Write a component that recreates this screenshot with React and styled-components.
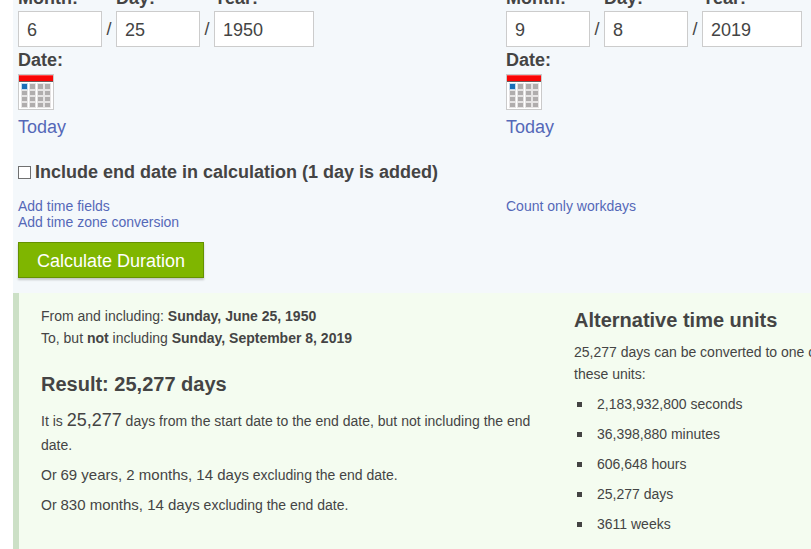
import React, { useState } from 'react';
import styled, { createGlobalStyle } from 'styled-components';

const START = { id: 'start', month: '6', day: '25', year: '1950' };
const END = { id: 'end', month: '9', day: '8', year: '2019' };

const UNITS = [
  '2,183,932,800 seconds',
  '36,398,880 minutes',
  '606,648 hours',
  '25,277 days',
  '3611 weeks',
];

// x / y of the day cells in the calendar icon
const CELL_X = [4, 12, 20, 27];
const CELL_Y = [10, 17, 23, 29];

const CalendarIcon = () => (
  <svg width="36" height="36" viewBox="0 0 36 36" shapeRendering="crispEdges" aria-hidden="true">
    <rect width="36" height="36" fill="#cacaca" />
    <rect x="1" y="1" width="34" height="34" fill="#fff" />
    <rect x="1" y="1" width="34" height="1" fill="#ff4a4a" />
    <rect x="1" y="2" width="34" height="5" fill="#fa0505" />
    <rect x="1" y="7" width="34" height="1" fill="#6b5a5a" />
    {CELL_Y.map((y, row) =>
      CELL_X.map((x, col) => {
        const active = row === 0 && col === 0;
        const h = row === 0 ? 5 : 4;
        return (
          <g key={`${x}-${y}`}>
            <rect
              x={x - 1}
              y={y - 1}
              width="7"
              height={h + 2}
              fill={active ? '#c3dcef' : '#e6e4e4'}
            />
            <rect x={x} y={y} width="5" height={h} fill={active ? '#1a6fb8' : '#b0adad'} />
          </g>
        );
      })
    )}
  </svg>
);

const DateGroup = ({ id, month, day, year }) => {
  const [value, setValue] = useState({ month, day, year });

  const onChange = (e) => setValue({ ...value, [e.target.name]: e.target.value });

  return (
    <div>
      <Fields>
        <Field>
          <Label htmlFor={`${id}-month`}>Month:</Label>
          <Input id={`${id}-month`} name="month" value={value.month} onChange={onChange} />
        </Field>
        <Slash>/</Slash>
        <Field>
          <Label htmlFor={`${id}-day`}>Day:</Label>
          <Input id={`${id}-day`} name="day" value={value.day} onChange={onChange} />
        </Field>
        <Slash>/</Slash>
        <Field>
          <Label htmlFor={`${id}-year`}>Year:</Label>
          <Input id={`${id}-year`} name="year" $wide value={value.year} onChange={onChange} />
        </Field>
      </Fields>
      <DateLabel htmlFor={`${id}-picker`}>Date:</DateLabel>
      <PickerButton id={`${id}-picker`} type="button">
        <CalendarIcon />
      </PickerButton>
      <TodayLink href="#today">Today</TodayLink>
    </div>
  );
};

const App = () => {
  const [includeEnd, setIncludeEnd] = useState(false);

  return (
    <>
      <GlobalStyle />
      <Page>
        <Form onSubmit={(e) => e.preventDefault()}>
          <Columns>
            <DateGroup {...START} />
            <DateGroup {...END} />
          </Columns>

          <CheckRow>
            <Checkbox
              id="include-end"
              type="checkbox"
              checked={includeEnd}
              onChange={(e) => setIncludeEnd(e.target.checked)}
            />
            <Label htmlFor="include-end">Include end date in calculation (1 day is added)</Label>
          </CheckRow>

          <Columns>
            <Links>
              <Link href="#time">Add time fields</Link>
              <Link href="#zone">Add time zone conversion</Link>
            </Links>
            <Links>
              <Link href="#workdays">Count only workdays</Link>
            </Links>
          </Columns>

          <SubmitButton type="submit">Calculate Duration</SubmitButton>
        </Form>

        <Results>
          <section>
            <Text>
              From and including: <b>Sunday, June 25, 1950</b>
              <br />
              To, but <b>not</b> including <b>Sunday, September 8, 2019</b>
            </Text>
            <ResultTitle>Result: 25,277 days</ResultTitle>
            <ResultText>
              It is <Big>25,277</Big> days from the start date to the end date, but not including the
              end date.
            </ResultText>
            <ResultText>
              Or <Medium>69 years, 2 months, 14 days</Medium> excluding the end date.
            </ResultText>
            <ResultText>
              Or <Medium>830 months, 14 days</Medium> excluding the end date.
            </ResultText>
          </section>

          <section>
            <UnitsTitle>Alternative time units</UnitsTitle>
            <Text>25,277 days can be converted to one of these units:</Text>
            <UnitList>
              {UNITS.map((unit) => (
                <Unit key={unit}>{unit}</Unit>
              ))}
            </UnitList>
          </section>
        </Results>
      </Page>
    </>
  );
};

const GlobalStyle = createGlobalStyle`
  * {
    box-sizing: border-box;
  }

  body {
    margin: 0;
    background: #fff;
    color: #444;
    font-family: 'Liberation Sans', Arial, sans-serif;
    font-size: 14px;
  }
`;

const Page = styled.main`
  display: flex;
  flex-direction: column;
  min-height: 100vh;
  padding-left: 13px;
  overflow: hidden;
`;

const Form = styled.form`
  min-width: 986px;
  margin-top: -13px;
  padding: 0 5px 15px;
  background: #f4f8fb;
`;

const Columns = styled.div`
  display: grid;
  grid-template-columns: 1fr 1fr;
`;

const Fields = styled.div`
  display: flex;
  align-items: flex-end;
`;

const Field = styled.div`
  display: flex;
  flex-direction: column;
  gap: 2px;
`;

const Label = styled.label`
  font-size: 18px;
  font-weight: bold;
  line-height: 22px;
`;

const DateLabel = styled(Label)`
  display: block;
  line-height: 27px;
`;

const Input = styled.input`
  width: ${({ $wide }) => ($wide ? '100px' : '84px')};
  height: 36px;
  padding: 2px 8px 0;
  border: 1px solid #ccc;
  border-radius: 0;
  background: #fff;
  color: #444;
  font: inherit;
  font-size: 18px;
`;

const Slash = styled.span`
  width: 14px;
  font-size: 18px;
  line-height: 36px;
  text-align: center;
`;

const PickerButton = styled.button`
  display: block;
  padding: 0;
  border: 0;
  background: none;
  cursor: pointer;

  svg {
    display: block;
  }
`;

const Link = styled.a`
  color: #5568b8;
  line-height: 16px;
  text-decoration: none;

  &:hover {
    text-decoration: underline;
  }
`;

const TodayLink = styled(Link)`
  display: inline-block;
  margin-top: 6px;
  font-size: 18px;
  line-height: 22px;
`;

const CheckRow = styled.div`
  display: flex;
  align-items: center;
  gap: 4px;
  margin: 23px 0 15px;
`;

const Checkbox = styled.input`
  appearance: none;
  width: 13px;
  height: 13px;
  margin: 0;
  border: 1px solid #707070;
  background: #fff;

  &:checked {
    background: #444;
  }
`;

const Links = styled.div`
  display: flex;
  flex-direction: column;
  align-items: flex-start;
`;

const SubmitButton = styled.button`
  display: block;
  height: 36px;
  margin-top: 12px;
  padding: 2px 18px 0;
  border: 1px solid #659200;
  background: #7fb600;
  box-shadow: 0 2px 2px rgba(0, 0, 0, 0.2);
  color: #fff;
  font: inherit;
  font-size: 18px;
  cursor: pointer;
`;

const Results = styled.div`
  flex: 1;
  display: grid;
  grid-template-columns: 490px 260px;
  column-gap: 43px;
  min-width: 986px;
  padding: 12px 22px;
  border-left: 6px solid #cce0c6;
  background: #f4fcf0;
`;

const Text = styled.p`
  margin: 0;
  line-height: 22px;
`;

const Title = styled.h2`
  font-size: 20px;
  line-height: 24px;
`;

const ResultTitle = styled(Title)`
  margin: 23px 0 12px;
`;

const UnitsTitle = styled(Title)`
  margin: 3px 0 9px;
`;

const ResultText = styled.p`
  margin: 0 0 6px;
  line-height: 24px;
`;

const Big = styled.span`
  font-size: 18px;
`;

const Medium = styled.span`
  font-size: 15px;
`;

const UnitList = styled.ul`
  display: flex;
  flex-direction: column;
  gap: 8px;
  margin: 8px 0 0;
  padding: 0;
  list-style: none;
`;

const Unit = styled.li`
  display: flex;
  align-items: center;
  gap: 15px;
  padding-left: 3px;
  line-height: 22px;

  &::before {
    content: '';
    width: 5px;
    height: 5px;
    background: #444;
  }
`;

export default App;
